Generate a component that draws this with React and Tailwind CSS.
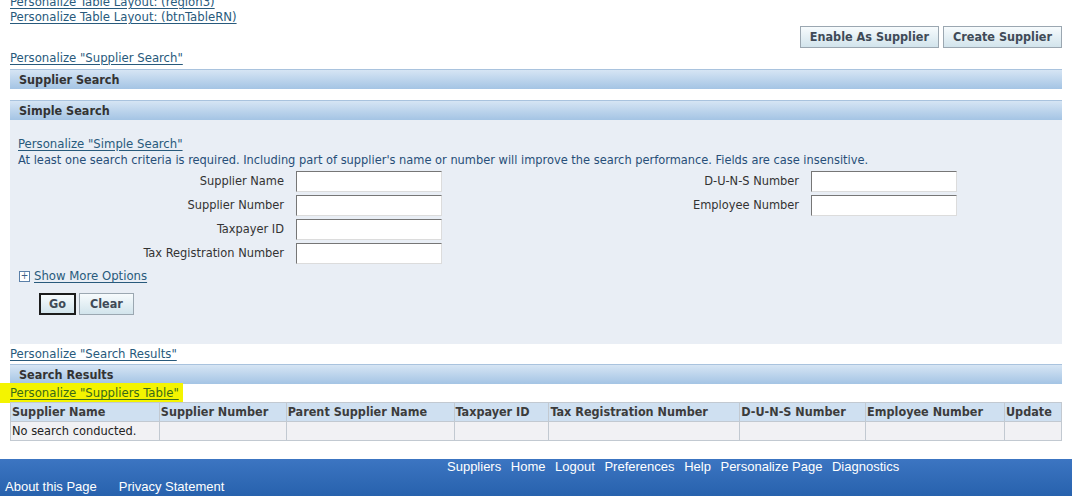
import React from 'react';

const LINK = 'text-[#285a7c] underline underline-offset-[2px] decoration-[1px] text-[13px]';

const Bar = ({ title }) => (
    <div className="mx-[10px] h-[20px] flex items-center pl-[9px] pt-[2px] border-t border-[#a9c3de] bg-gradient-to-b from-[#d6e5f4] to-[#a4c4e4]">
        <span className="text-[12.5px] font-bold text-[#333333] leading-none">{title}</span>
    </div>
);

const Btn = ({ label, focused, pad = 'px-[9px]' }) => (
    <button
        className={`h-[22px] ${pad} text-[12.5px] font-bold text-[#3f4a57] leading-none bg-gradient-to-b from-[#f7fbfd] to-[#d2e4ec] border ${focused ? 'border-[#1c1c1c] border-[2px]' : 'border-[#9ba7b1]'}`}
    >
        {label}
    </button>
);

const Field = ({ label, labelWidth }) => (
    <div className="h-[24px] flex items-center">
        <span className="text-[12.7px] text-[#333333] text-right pr-[12px]" style={{ width: labelWidth }}>{label}</span>
        <input className="w-[146px] h-[21px] bg-white border border-t-[#767676] border-l-[#767676] border-b-[#dcdcdc] border-r-[#dcdcdc] outline-none" />
    </div>
);

const COLUMNS = [
    ['Supplier Name', 149],
    ['Supplier Number', 127],
    ['Parent Supplier Name', 168],
    ['Taxpayer ID', 95],
    ['Tax Registration Number', 191],
    ['D-U-N-S Number', 126],
    ['Employee Number', 139],
    ['Update', 57]
];

const FOOTER_LINKS = ['Suppliers', 'Home', 'Logout', 'Preferences', 'Help', 'Personalize Page', 'Diagnostics'];

export default function App() {
    return (
        <div className="w-[1072px] h-[496px] overflow-hidden bg-white flex flex-col font-['DejaVu_Sans_Condensed','DejaVu_Sans',sans-serif] text-[12.7px]">
            {/* personalization links up top */}
            <div className="pl-[10px] -mt-[6px] leading-[15px] flex flex-col items-start">
                <a className={LINK}>Personalize Table Layout: (region3)</a>
                <a className={LINK}>Personalize Table Layout: (btnTableRN)</a>
            </div>

            <div className="flex justify-end gap-[4px] pr-[10px] mt-[2px]">
                <Btn label="Enable As Supplier" />
                <Btn label="Create Supplier" />
            </div>

            <div className="pl-[10px] mt-[2px] leading-[15px]">
                <a className={LINK}>Personalize "Supplier Search"</a>
            </div>

            <div className="mt-[4px]">
                <Bar title="Supplier Search" />
            </div>

            <div className="mt-[11px]">
                <Bar title="Simple Search" />
            </div>

            {/* search panel */}
            <div className="mx-[10px] h-[224px] bg-[#e9eef5] pl-[8px] pt-[15px]">
                <div className="leading-[17px]">
                    <a className={LINK}>Personalize "Simple Search"</a>
                </div>
                <div className="leading-[16px] text-[#274e78]">
                    At least one search criteria is required. Including part of supplier's name or number will improve the search performance. Fields are case insensitive.
                </div>
                <div className="flex mt-[1px]">
                    <div className="flex flex-col">
                        <Field label="Supplier Name" labelWidth={278} />
                        <Field label="Supplier Number" labelWidth={278} />
                        <Field label="Taxpayer ID" labelWidth={278} />
                        <Field label="Tax Registration Number" labelWidth={278} />
                    </div>
                    <div className="flex flex-col">
                        <Field label="D-U-N-S Number" labelWidth={369} />
                        <Field label="Employee Number" labelWidth={369} />
                    </div>
                </div>
                <div className="flex items-center mt-[3px] h-[16px] pl-[1px]">
                    <span className="w-[11px] h-[11px] border border-[#5a7fa8] bg-white flex items-center justify-center text-[#3c5f88] text-[10px] leading-none mr-[4px]">+</span>
                    <a className={LINK}>Show More Options</a>
                </div>
                <div className="flex gap-[3px] ml-[21px] mt-[9px]">
                    <Btn label="Go" focused pad="px-[8px]" />
                    <Btn label="Clear" pad="px-[10px]" />
                </div>
            </div>

            <div className="pl-[10px] mt-[2px] leading-[15px]">
                <a className={LINK}>Personalize "Search Results"</a>
            </div>

            <div className="mt-[3px]">
                <Bar title="Search Results" />
            </div>

            <div className="h-[18px] flex items-center">
                <div className="w-[183px] h-[20px] pl-[10px] flex items-center bg-[#f4f400]">
                    <a className="text-[#3a6a18] underline underline-offset-[2px] text-[13px]">Personalize "Suppliers Table"</a>
                </div>
            </div>

            {/* results table */}
            <table className="mx-[10px] border-collapse">
                <thead>
                    <tr className="bg-[#cfe0f1] h-[19px]">
                        {COLUMNS.map(([name, w]) => (
                            <th key={name} style={{ width: w }} className="border border-[#c2c9d1] text-left font-bold text-[12.5px] text-[#3c3c3c] px-[1px] leading-none">{name}</th>
                        ))}
                    </tr>
                </thead>
                <tbody>
                    <tr className="bg-[#f1f1f4] h-[19px]">
                        {COLUMNS.map(([name], i) => (
                            <td key={name} className="border border-[#c2c9d1] text-[#222222] px-[1px] leading-none">{i === 0 ? 'No search conducted.' : ''}</td>
                        ))}
                    </tr>
                </tbody>
            </table>

            {/* footer */}
            <div className="mt-auto h-[37px] bg-gradient-to-b from-[#3c75c2] to-[#2762ad] font-['Liberation_Sans_Narrow','Liberation_Sans',sans-serif] text-[13px] text-white leading-[18px] flex flex-col">
                <div className="flex gap-[9.6px] pl-[447px] mt-[-1px]">
                    {FOOTER_LINKS.map(l => <span key={l}>{l}</span>)}
                </div>
                <div className="flex gap-[22px] pl-[5px] mt-[2px]">
                    <span>About this Page</span>
                    <span>Privacy Statement</span>
                </div>
            </div>
        </div>
    );
}
